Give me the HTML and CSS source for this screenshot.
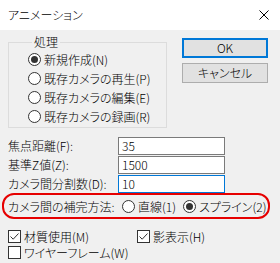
FILE: index.html
```html
<!DOCTYPE html>
<html lang="ja">
<head>
<meta charset="utf-8">
<title>アニメーション</title>
<link rel="stylesheet" href="styles.css">
</head>
<body>
<div class="titlebar">
  <span class="title">アニメーション</span>
  <svg class="close" viewBox="0 0 10 10"><path d="M0.5 0.5 L9.5 9.5 M9.5 0.5 L0.5 9.5" stroke="#000" stroke-width="1" fill="none"/></svg>
</div>
<div class="content">
  <div class="top">
    <fieldset class="group">
      <legend>処理</legend>
      <div class="radio"><span class="rb on"></span>新規作成(N)</div>
      <div class="radio"><span class="rb"></span>既存カメラの再生(P)</div>
      <div class="radio"><span class="rb"></span>既存カメラの編集(E)</div>
      <div class="radio"><span class="rb"></span>既存カメラの録画(R)</div>
    </fieldset>
    <div class="buttons">
      <button class="btn default">OK</button>
      <button class="btn">キャンセル</button>
    </div>
  </div>
  <div class="fields">
    <span class="lbl">焦点距離(F):</span><div class="input">35</div>
    <span class="lbl">基準Z値(Z):</span><div class="input">1500</div>
    <span class="lbl">カメラ間分割数(D):</span><div class="input focus">10</div>
  </div>
  <div class="interp">
    <span class="ilabel">カメラ間の補完方法:</span>
    <div class="radio iopt1"><span class="rb"></span>直線(1)</div>
    <div class="radio"><span class="rb on"></span>スプライン(2)</div>
  </div>
  <div class="checks">
    <div class="check"><span class="cb on"><svg viewBox="0 0 11 11"><path d="M1.5 5.5 L4.2 8.2 L9.5 2.5" stroke="#333" stroke-width="1" fill="none"/></svg></span>材質使用(M)</div>
    <div class="check"><span class="cb on"><svg viewBox="0 0 11 11"><path d="M1.5 5.5 L4.2 8.2 L9.5 2.5" stroke="#333" stroke-width="1" fill="none"/></svg></span>影表示(H)</div>
    <div class="check"><span class="cb"></span>ワイヤーフレーム(W)</div>
  </div>
</div>
</body>
</html>
```
FILE: styles.css
```css
* { box-sizing: border-box; }
html, body { margin: 0; padding: 0; }
body {
  width: 280px;
  height: 263px;
  overflow: hidden;
  background: #f0f0f0;
  color: #000;
  font-family: "Noto Sans CJK JP", sans-serif;
  font-size: 12px;
  font-weight: 300;
  font-feature-settings: "palt";
}
.titlebar {
  height: 30px;
  background: #fff;
  display: flex;
  align-items: center;
  justify-content: space-between;
  padding: 0 11px 0 8px;
}
.title { line-height: 16px; }
.close { width: 10px; height: 10px; display: block; }
.content { padding: 4px 8px 0 8px; }
.top {
  display: grid;
  grid-template-columns: 159px 86px;
  column-gap: 15px;
  align-items: start;
}
.group {
  margin: 0;
  min-width: 0;
  border: 1px solid #dcdcdc;
  padding: 0 0 1px 19px;
}
.group legend {
  margin-left: 4px;
  padding: 0 2px;
  line-height: 16px;
  font-size: 12px;
}
.radio {
  display: flex;
  align-items: center;
  height: 19px;
  white-space: nowrap;
}
.rb {
  width: 13px;
  height: 13px;
  flex: none;
  border: 1px solid #333;
  border-radius: 50%;
  background: #fff;
  margin-right: 3px;
  display: flex;
  align-items: center;
  justify-content: center;
}
.rb.on::after {
  content: "";
  width: 7px;
  height: 7px;
  border-radius: 50%;
  background: #333;
}
.buttons {
  display: flex;
  flex-direction: column;
  gap: 5px;
  padding-top: 4px;
}
.btn {
  width: 86px;
  height: 20px;
  padding: 0;
  margin: 0;
  background: #e1e1e1;
  border: 1px solid #adadad;
  font: inherit;
  font-feature-settings: "palt";
  color: #000;
  line-height: 16px;
}
.btn.default { border: 2px solid #0078d7; }
.fields {
  display: grid;
  grid-template-columns: 110px 107px;
  grid-auto-rows: 18px;
  row-gap: 1px;
  margin-top: 9px;
  align-items: center;
}
.lbl { line-height: 16px; white-space: nowrap; }
.input {
  height: 18px;
  background: #fff;
  border: 1px solid #7a7a7a;
  padding-left: 3px;
  line-height: 16px;
}
.input.focus { border-color: #0078d7; }
.interp {
  display: flex;
  align-items: center;
  height: 26px;
  margin: 0 2px 0 -6px;
  border: 2px solid #e60000;
  border-radius: 12px;
  padding-left: 4px;
  white-space: nowrap;
}
.ilabel { width: 114px; flex: none; }
.iopt1 { width: 61px; flex: none; }
.checks {
  display: grid;
  grid-template-columns: 129px auto;
  grid-auto-rows: 16px;
  margin-top: 9px;
}
.check {
  display: flex;
  align-items: center;
  white-space: nowrap;
}
.cb {
  width: 13px;
  height: 13px;
  flex: none;
  border: 1px solid #333;
  background: #fff;
  margin-right: 3px;
  display: flex;
}
.cb svg { width: 11px; height: 11px; display: block; }
```
